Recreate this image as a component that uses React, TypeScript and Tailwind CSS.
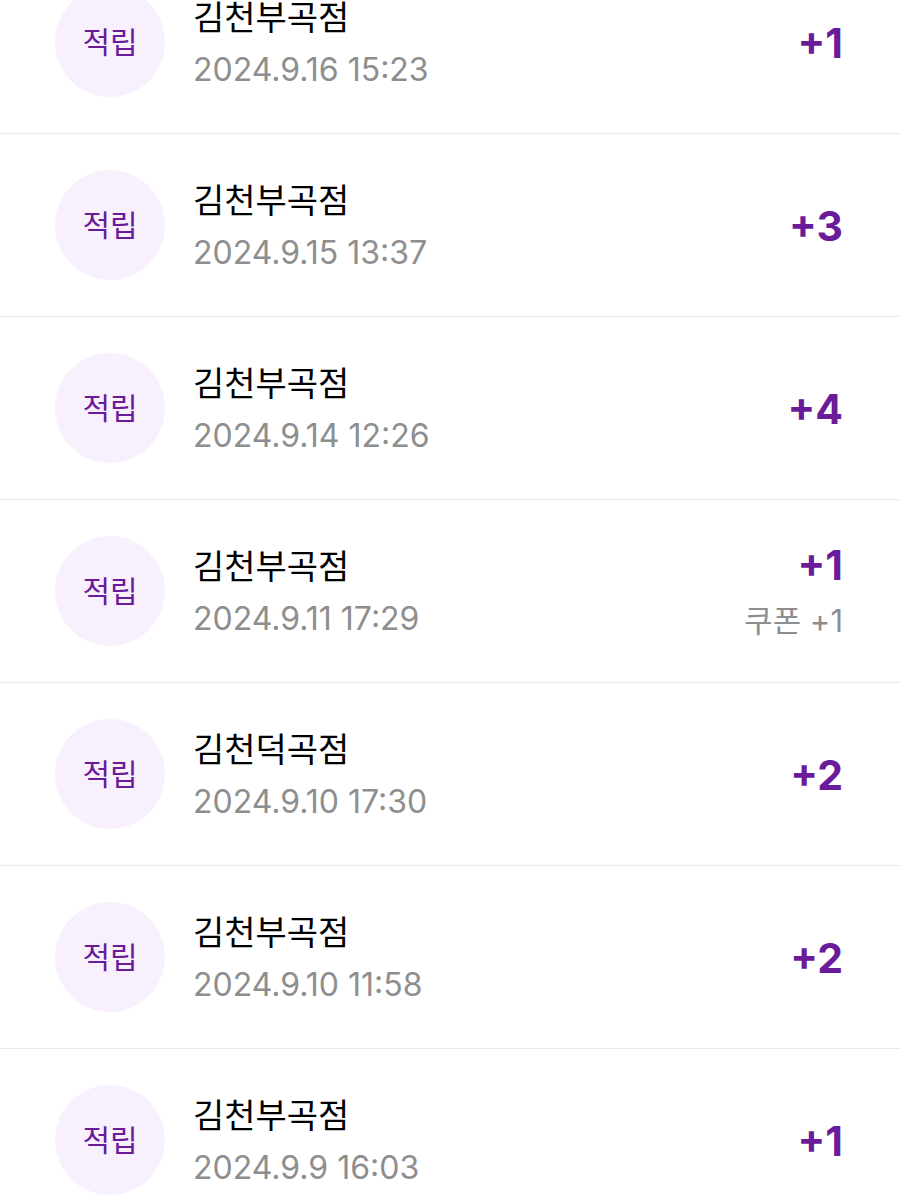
const ROWS = [
  { store: "김천부곡점", date: "2024.9.16 15:23", points: 1 },
  { store: "김천부곡점", date: "2024.9.15 13:37", points: 3 },
  { store: "김천부곡점", date: "2024.9.14 12:26", points: 4 },
  { store: "김천부곡점", date: "2024.9.11 17:29", points: 1, coupon: 1 },
  { store: "김천덕곡점", date: "2024.9.10 17:30", points: 2 },
  { store: "김천부곡점", date: "2024.9.10 11:58", points: 2 },
  { store: "김천부곡점", date: "2024.9.9 16:03", points: 1 },
];

const font = { fontFamily: 'Inter, "Noto Sans CJK KR", sans-serif' };

export default function App() {
  return (
    <div className="w-[900px] h-[1200px] overflow-hidden bg-white" style={font}>
      <div className="-mt-[49px]">
        {ROWS.map((row, i) => (
          <div
            key={i}
            className="h-[183px] flex items-center pl-[55px] pr-[57px] border-b border-[#ebebeb]"
          >
            <div className="w-[110px] h-[110px] rounded-full bg-[#f8f1fd] flex items-center justify-center shrink-0">
              <span className="text-[30px] text-[#6a1b9a] leading-none">적립</span>
            </div>
            <div className="ml-[28px] pt-[4px] flex-1 flex flex-col">
              <span className="text-[34px] leading-[40px] text-black">{row.store}</span>
              <span className="text-[32px] leading-[40px] mt-[12px] text-[#8e8e8e]">{row.date}</span>
            </div>
            <div className="flex flex-col items-end pt-[2px]">
              <span className="text-[41px] leading-[44px] font-bold text-[#6a1b9a]">+{row.points}</span>
              {row.coupon && (
                <span className="text-[31px] leading-[40px] mt-[14px] text-[#8e8e8e]">쿠폰 +{row.coupon}</span>
              )}
            </div>
          </div>
        ))}
      </div>
    </div>
  );
}
